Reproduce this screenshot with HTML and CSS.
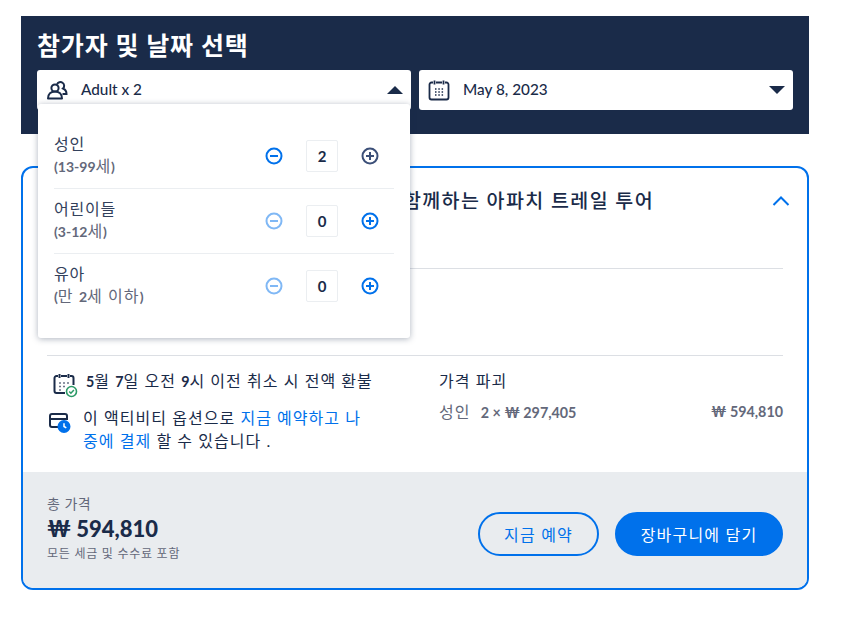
FILE: index.html
```html
<!DOCTYPE html>
<html lang="ko">
<head>
<meta charset="utf-8">
<title>참가자 및 날짜 선택</title>
<link rel="stylesheet" href="styles.css">
</head>
<body>
<main class="page">
  <section class="picker">
    <h1 class="picker-title">참가자 및 날짜 선택</h1>
    <div class="picker-row">
      <div class="select">
        <svg class="select-icon" width="22" height="22" viewBox="0 0 22 22" fill="none" stroke="#1a2b49" stroke-width="2"><circle cx="9" cy="9" r="3.6"/><path d="M2 19.500c0-4.500 3-7 7-7s7 2.500 7 7z" stroke-linejoin="round"/><path d="M11 5.500a3.700 3.700 0 1 1 6 4c2 .8 3.500 2.500 3.500 5.500h-4"/></svg>
        <span class="select-text">Adult x 2</span>
        <span class="caret caret-up"></span>
      </div>
      <div class="select">
        <svg class="select-icon" width="22" height="22" viewBox="0 0 22 22" fill="none" stroke="#1a2b49" stroke-width="1.800"><path d="M5 3.500H3.500a2 2 0 0 0-2 2v13a2 2 0 0 0 2 2h15a2 2 0 0 0 2-2v-13a2 2 0 0 0-2-2H17M8 3.500h6M6.500 1.500v4M15.500 1.500v4"/><path d="M7 10h1.500M10.300 10h1.500M13.600 10h1.500M7 13h1.500M10.300 13h1.500M13.600 13h1.500M7 16h1.500M10.300 16h1.500M13.600 16h1.500" stroke-width="1.400"/></svg>
        <span class="select-text">May 8, 2023</span>
        <span class="caret caret-down"></span>
      </div>
    </div>
    <div class="dropdown">
      <div class="pax-row">
        <div class="pax-label"><div class="pax-name">성인</div><div class="pax-age"><b class="num">(13-99</b>세<b class="num">)</b></div></div>
        <div class="stepper">
          <svg class="step" viewBox="0 0 18 18" fill="none" stroke="#0071eb" stroke-width="2"><circle cx="9" cy="9" r="7.500"/><path d="M5 9h8"/></svg>
          <span class="count">2</span>
          <svg class="step" viewBox="0 0 18 18" fill="none" stroke="#3b4f78" stroke-width="2"><circle cx="9" cy="9" r="7.500"/><path d="M5 9h8M9 5v8"/></svg>
        </div>
      </div>
      <div class="pax-row">
        <div class="pax-label"><div class="pax-name">어린이들</div><div class="pax-age"><b class="num">(3-12</b>세<b class="num">)</b></div></div>
        <div class="stepper">
          <svg class="step" viewBox="0 0 18 18" fill="none" stroke="#80b8f5" stroke-width="2"><circle cx="9" cy="9" r="7.500"/><path d="M5 9h8"/></svg>
          <span class="count">0</span>
          <svg class="step" viewBox="0 0 18 18" fill="none" stroke="#0071eb" stroke-width="2"><circle cx="9" cy="9" r="7.500"/><path d="M5 9h8M9 5v8"/></svg>
        </div>
      </div>
      <div class="pax-row">
        <div class="pax-label"><div class="pax-name">유아</div><div class="pax-age pax-age-wide"><b class="num">(</b>만 <b class="num">2</b>세 이하<b class="num">)</b></div></div>
        <div class="stepper">
          <svg class="step" viewBox="0 0 18 18" fill="none" stroke="#80b8f5" stroke-width="2"><circle cx="9" cy="9" r="7.500"/><path d="M5 9h8"/></svg>
          <span class="count">0</span>
          <svg class="step" viewBox="0 0 18 18" fill="none" stroke="#0071eb" stroke-width="2"><circle cx="9" cy="9" r="7.500"/><path d="M5 9h8M9 5v8"/></svg>
        </div>
      </div>
    </div>
  </section>

  <section class="card">
    <div class="card-head">
      <h2 class="card-title">함께하는 아파치 트레일 투어</h2>
      <svg class="chevron" width="18" height="10" viewBox="0 0 18 10" fill="none" stroke="#0071eb" stroke-width="2"><path d="M1.500 9 9 1.500 16.500 9"/></svg>
    </div>
    <div class="card-gap"></div>
    <div class="details">
      <div class="policies">
        <div class="policy policy-refund">
          <svg class="policy-icon" width="26" height="26" viewBox="0 0 26 26" fill="none" stroke="#1a2b49" stroke-width="2"><path d="M6 4H4.500a2 2 0 0 0-2 2v13a2 2 0 0 0 2 2H13M9 4h6M18 4h1.500a2 2 0 0 1 2 2v7M7.500 2v4M16.500 2v4"/><path d="M7 11h2M11 11h2M15 11h2M7 14.500h2M11 14.500h2M7 18h2" stroke="#6b7488" stroke-width="1.600"/><circle cx="19.500" cy="19.500" r="5" fill="#fff" stroke="#2b9a66" stroke-width="1.600"/><path d="M17.200 19.500l1.700 1.700 3-3.200" stroke="#2b9a66" stroke-width="1.500"/></svg>
          <span class="policy-text"><b class="num">5</b>월 <b class="num">7</b>일 오전 <b class="num">9</b>시 이전 취소 시 전액 환불</span>
        </div>
        <div class="policy policy-pay">
          <svg class="policy-icon" width="24" height="24" viewBox="0 0 24 24" fill="none" stroke="#1a2b49" stroke-width="2"><path d="M10 17H3a2 2 0 0 1-2-2V6a2 2 0 0 1 2-2h13a2 2 0 0 1 2 2v4M1 9h17"/><circle cx="15" cy="16.500" r="5.500" fill="#0071eb" stroke="#0071eb"/><path d="M15 13.300v3.200l2.300 1.400" stroke="#fff" stroke-width="1.500"/></svg>
          <span class="policy-text policy-wrap">이 액티비티 옵션으로 <span class="link">지금 예약하고 나중에 결제</span> 할 수 있습니다 .</span>
        </div>
      </div>
      <div class="breakdown">
        <div class="breakdown-title">가격 파괴</div>
        <div class="breakdown-row">
          <span>성인 &nbsp;<b class="num">2 × ₩ 297,405</b></span>
          <b class="num">₩ 594,810</b>
        </div>
      </div>
    </div>
    <footer class="card-foot">
      <div class="total">
        <div class="total-label">총 가격</div>
        <div class="total-price">₩ 594,810</div>
        <div class="total-note">모든 세금 및 수수료 포함</div>
      </div>
      <div class="actions">
        <button class="btn btn-outline">지금 예약</button>
        <button class="btn btn-fill">장바구니에 담기</button>
      </div>
    </footer>
  </section>
</main>
</body>
</html>
```
FILE: styles.css
```css
* { box-sizing: border-box; }
html, body { margin: 0; padding: 0; background: #fff; }
body {
  font-family: "Lato", "Noto Sans CJK KR", sans-serif;
  color: #1a2b49;
  font-size: 16px;
}
.num { font-size: 14.3px; font-weight: 700; letter-spacing: 0; }
.page { width: 788px; margin: 16px 0 30px 21px; }

.picker {
  position: relative;
  height: 118px;
  padding: 13px 16px 0;
  background: #1a2b49;
}
.picker-title {
  margin: 0 0 9px;
  height: 32px;
  line-height: 32px;
  font-size: 25px;
  letter-spacing: .85px;
  font-weight: 700;
  color: #fff;
}
.picker-row { display: grid; grid-template-columns: 374px 374px; gap: 8px; }
.select {
  display: flex;
  align-items: center;
  height: 40px;
  padding: 0 8px 0 9px;
  background: #fff;
  border-radius: 3px;
}
.select-icon { flex: none; margin-right: 13px; }
.select-text { flex: 1; font-size: 15.3px; font-weight: 500; padding-bottom: 3px; }
.caret { width: 0; height: 0; border-left: 8px solid transparent; border-right: 8px solid transparent; }
.caret-up { border-bottom: 8px solid #1a2b49; }
.caret-down { border-top: 8px solid #1a2b49; }

.dropdown {
  position: absolute;
  left: 17px;
  top: 88px;
  z-index: 2;
  width: 372px;
  height: 234px;
  padding: 20px 16px 0;
  background: #fff;
  border-radius: 3px;
  box-shadow: 0 1px 6px rgba(26, 43, 73, .35);
}
.pax-row {
  display: flex;
  align-items: center;
  justify-content: space-between;
  height: 65px;
  border-bottom: 1px solid #ebeef1;
}
.pax-row:last-child { border-bottom-color: transparent; }
.pax-label { margin-top: -2px; letter-spacing: .8px; font-weight: 400; }
.pax-name { line-height: 22px; color: #33415c; }
.pax-age { line-height: 22px; color: #63687a; }
.pax-age .num { font-size: 14px; font-weight: 700; }
.pax-age-wide { letter-spacing: 1.1px; }
.stepper { display: flex; align-items: center; gap: 23px; padding-right: 15px; }
.step { width: 18px; height: 18px; display: block; }
.count {
  width: 32px;
  height: 32px;
  line-height: 30px;
  text-align: center;
  font-size: 15px;
  font-weight: 700;
  border: 1px solid #ebeef1;
  border-radius: 2px;
}

.card {
  margin-top: 32px;
  height: 424px;
  border: 2px solid #0071eb;
  border-radius: 12px;
  overflow: hidden;
  display: flex;
  flex-direction: column;
}
.card-head {
  display: flex;
  align-items: flex-start;
  height: 101px;
  margin: 0 24px;
  padding-top: 19px;
  border-bottom: 1px solid #dcdfe4;
}
.card-title {
  flex: 1;
  margin: 0 118px 0 0;
  font-size: 19.5px;
  letter-spacing: 1.4px;
  line-height: 28px;
  font-weight: 500;
  text-align: right;
  white-space: nowrap;
}
.chevron { flex: none; margin-top: 9px; margin-right: -7px; }
.card-gap { height: 87px; margin: 0 24px; border-bottom: 1px solid #dcdfe4; }

.details {
  display: flex;
  height: 116px;
  margin: 0 24px;
  padding-top: 13px;
  letter-spacing: 1.05px;
}
.policies { width: 392px; flex: none; }
.policy { display: flex; align-items: flex-start; }
.policy-refund { padding-left: 5px; margin-bottom: 8px; }
.policy-refund .policy-icon { margin: 3px 8px 0 0; }
.policy-pay { padding-left: 2px; }
.policy-pay .policy-icon { margin: 4px 10px 0 0; }
.policy-text { line-height: 23px; }
.policy-wrap { width: 286px; word-break: break-all; }
.link { color: #0071eb; }
.breakdown { flex: 1; }
.breakdown-title { line-height: 24px; margin-bottom: 7px; }
.breakdown-row { display: flex; justify-content: space-between; line-height: 24px; color: #63687a; }

.card-foot {
  flex: 1;
  display: flex;
  align-items: center;
  justify-content: space-between;
  padding: 0 24px;
  background: #e9ecef;
}
.total { margin-top: -2px; }
.total-label { font-size: 14px; letter-spacing: .5px; line-height: 18px; color: #63687a; }
.total-price { font-size: 22px; line-height: 32px; font-weight: 900; }
.total-note { font-size: 12px; letter-spacing: .75px; line-height: 18px; color: #63687a; }
.actions { display: flex; gap: 16px; padding-top: 8px; }
.btn {
  height: 44px;
  border-radius: 22px;
  font-family: inherit;
  font-size: 16px;
  letter-spacing: 1.2px;
  border: 2px solid #0071eb;
  padding: 0;
}
.btn-outline { width: 121px; background: transparent; color: #0071eb; }
.btn-fill { width: 168px; background: #0071eb; color: #fff; }
```
